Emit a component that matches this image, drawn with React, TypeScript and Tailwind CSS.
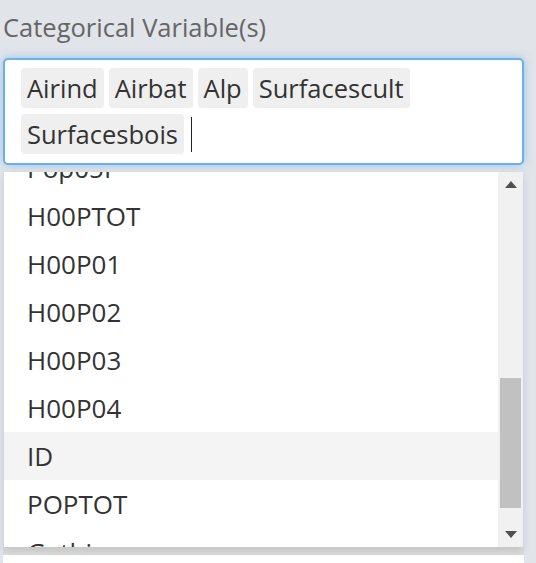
const selected = ['Airind', 'Airbat', 'Alp', 'Surfacescult', 'Surfacesbois'];

const options = ['Pop05P', 'H00PTOT', 'H00P01', 'H00P02', 'H00P03', 'H00P04', 'ID', 'POPTOT', 'Gathien'];

// classic scrollbar arrow
const Arrow = ({ up }: { up: boolean }) => (
  <svg width="12" height="7" viewBox="0 0 12 7">
    <polygon points={up ? '6,0 12,7 0,7' : '0,0 12,0 6,7'} fill="#505050" />
  </svg>
);

export default function App() {
  return (
    <div className="min-h-screen bg-[#e1e4e9] pl-[3px] pr-[12px] pt-[10px] font-['Open_Sans',sans-serif]">
      <label className="block text-[25.5px] leading-[34px] text-[#666666]">Categorical Variable(s)</label>

      {/* selectize input, focused */}
      <div className="mt-[14px] flex flex-wrap items-center gap-x-[5px] gap-y-[6px] rounded-[5px] border-2 border-[#6cb0e8] bg-white pl-[16px] pr-4 pt-[8px] pb-[9px] shadow-[0_0_8px_rgba(102,175,233,0.6)]">
        {selected.map((s) => (
          <span key={s} className="rounded-[4px] bg-[#efefef] px-[6px] text-[25.5px] leading-[40px] text-[#333333]">
            {s}
          </span>
        ))}
        <span className="ml-[2px] h-[35px] w-px bg-[#222222]" />
      </div>

      {/* dropdown */}
      <div className="relative z-10 mx-[1px] mt-[7px] flex h-[375px] bg-white shadow-[0_4px_8px_rgba(0,0,0,0.12)]">
        <div className="flex-1 overflow-hidden">
          <div className="mt-[-28px]">
            {options.map((o) => (
              <div
                key={o}
                className={`h-[48px] pl-[23px] text-[26px] leading-[48px] text-[#333333] ${o === 'ID' ? 'bg-[#f4f4f4]' : ''}`}
              >
                {o}
              </div>
            ))}
          </div>
        </div>
        <div className="flex w-[25px] flex-col bg-[#f1f1f1]">
          <div className="flex h-[25px] items-center justify-center">
            <Arrow up />
          </div>
          <div className="flex-1">
            <div className="mx-[2px] mt-[181px] h-[130px] bg-[#c1c1c1]" />
          </div>
          <div className="flex h-[25px] items-center justify-center">
            <Arrow up={false} />
          </div>
        </div>
      </div>

      {/* next field, under the dropdown */}
      <div className="h-[40px] border-t-[8px] border-[#dddddd] bg-white" />
    </div>
  );
}
